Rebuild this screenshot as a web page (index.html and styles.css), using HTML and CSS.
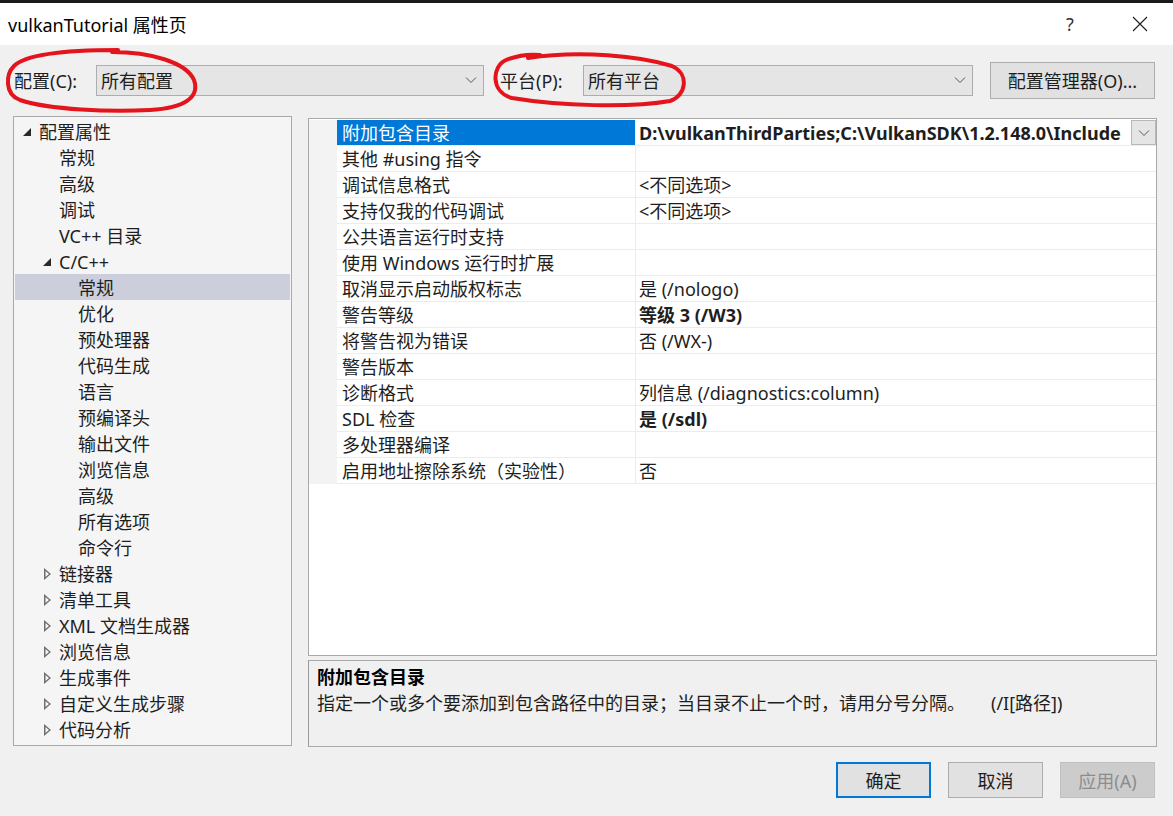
FILE: index.html
```html
<!DOCTYPE html>
<html lang="zh-CN">
<head>
  <meta charset="UTF-8" />
  <title>vulkanTutorial 属性页</title>
  <link rel="stylesheet" href="styles.css">
</head>
<body>
  <!-- title bar -->
  <div class="titlebar">
    <div class="title">vulkanTutorial 属性页</div>
    <div class="title-help">?</div>
    <div class="title-close">
      <svg width="16" height="16" viewBox="0 0 16 16"><path d="M1 1L15 15M15 1L1 15" stroke="#222" stroke-width="1.2" fill="none"/></svg>
    </div>
  </div>

  <!-- configuration / platform row -->
  <div class="toolbar">
    <label class="tb-label lbl-config">配置(C):</label>
    <div class="combo combo-config">
      <span>所有配置</span>
      <svg class="chev" width="12" height="8" viewBox="0 0 12 8"><path d="M1 1.5L6 6.5L11 1.5" stroke="#555" stroke-width="1" fill="none"/></svg>
    </div>
    <label class="tb-label lbl-platform">平台(P):</label>
    <div class="combo combo-platform">
      <span>所有平台</span>
      <svg class="chev" width="12" height="8" viewBox="0 0 12 8"><path d="M1 1.5L6 6.5L11 1.5" stroke="#555" stroke-width="1" fill="none"/></svg>
    </div>
    <button class="btn btn-manager">配置管理器(O)...</button>
  </div>

  <div class="main">
    <!-- left tree -->
    <div class="tree">
      <div class="node lv0"><span class="tri-open"></span>配置属性</div>
      <div class="node lv1">常规</div>
      <div class="node lv1">高级</div>
      <div class="node lv1">调试</div>
      <div class="node lv1">VC++ 目录</div>
      <div class="node lv1 has-tri"><span class="tri-open"></span>C/C++</div>
      <div class="node lv2 selected">常规</div>
      <div class="node lv2">优化</div>
      <div class="node lv2">预处理器</div>
      <div class="node lv2">代码生成</div>
      <div class="node lv2">语言</div>
      <div class="node lv2">预编译头</div>
      <div class="node lv2">输出文件</div>
      <div class="node lv2">浏览信息</div>
      <div class="node lv2">高级</div>
      <div class="node lv2">所有选项</div>
      <div class="node lv2">命令行</div>
      <div class="node lv1 has-tri"><span class="tri-closed"></span>链接器</div>
      <div class="node lv1 has-tri"><span class="tri-closed"></span>清单工具</div>
      <div class="node lv1 has-tri"><span class="tri-closed"></span>XML 文档生成器</div>
      <div class="node lv1 has-tri"><span class="tri-closed"></span>浏览信息</div>
      <div class="node lv1 has-tri"><span class="tri-closed"></span>生成事件</div>
      <div class="node lv1 has-tri"><span class="tri-closed"></span>自定义生成步骤</div>
      <div class="node lv1 has-tri"><span class="tri-closed"></span>代码分析</div>
    </div>

    <div class="right">
      <!-- property grid -->
      <div class="grid">
        <div class="prop selected">
          <div class="p-name">附加包含目录</div>
          <div class="p-value bold">
            <span class="p-text">D:\vulkanThirdParties;C:\VulkanSDK\1.2.148.0\Include</span>
            <span class="p-drop">
              <svg width="12" height="8" viewBox="0 0 12 8"><path d="M1 1.5L6 6.5L11 1.5" stroke="#555" stroke-width="1" fill="none"/></svg>
            </span>
          </div>
        </div>
        <div class="prop"><div class="p-name">其他 #using 指令</div><div class="p-value"></div></div>
        <div class="prop"><div class="p-name">调试信息格式</div><div class="p-value">&lt;不同选项&gt;</div></div>
        <div class="prop"><div class="p-name">支持仅我的代码调试</div><div class="p-value">&lt;不同选项&gt;</div></div>
        <div class="prop"><div class="p-name">公共语言运行时支持</div><div class="p-value"></div></div>
        <div class="prop"><div class="p-name">使用 Windows 运行时扩展</div><div class="p-value"></div></div>
        <div class="prop"><div class="p-name">取消显示启动版权标志</div><div class="p-value">是 (/nologo)</div></div>
        <div class="prop"><div class="p-name">警告等级</div><div class="p-value bold">等级 3 (/W3)</div></div>
        <div class="prop"><div class="p-name">将警告视为错误</div><div class="p-value">否 (/WX-)</div></div>
        <div class="prop"><div class="p-name">警告版本</div><div class="p-value"></div></div>
        <div class="prop"><div class="p-name">诊断格式</div><div class="p-value">列信息 (/diagnostics:column)</div></div>
        <div class="prop"><div class="p-name">SDL 检查</div><div class="p-value bold">是 (/sdl)</div></div>
        <div class="prop"><div class="p-name">多处理器编译</div><div class="p-value"></div></div>
        <div class="prop"><div class="p-name">启用地址擦除系统（实验性）</div><div class="p-value">否</div></div>
      </div>

      <!-- description -->
      <div class="desc">
        <div class="desc-title">附加包含目录</div>
        <div class="desc-text">指定一个或多个要添加到包含路径中的目录；当目录不止一个时，请用分号分隔。<span class="desc-switch">(/I[路径])</span></div>
      </div>
    </div>
  </div>

  <!-- dialog buttons -->
  <div class="footer">
    <button class="btn btn-ok">确定</button>
    <button class="btn">取消</button>
    <button class="btn btn-disabled">应用(A)</button>
  </div>

  <!-- red hand-drawn marks over the screenshot -->
  <svg class="marks" width="1173" height="816" viewBox="0 0 1173 816">
    <path d="M112 52 C150 52 186 62 194 80 C200 97 185 108 150 110 C110 112 50 110 20 100 C4 94 6 74 14 66 C26 54 70 50 118 50" stroke="#e3141c" stroke-width="4" fill="none" stroke-linecap="round"/>
    <path d="M528 58 C580 50 640 56 672 66 C690 74 686 96 670 101 C630 108 560 106 512 98 C490 92 492 66 506 60 C516 56 530 54 540 55" stroke="#e3141c" stroke-width="4" fill="none" stroke-linecap="round"/>
  </svg>
</body>
</html>
```

FILE: styles.css
```css
/* ---------- reset ---------- */
* {
  margin: 0;
  padding: 0;
  box-sizing: border-box;
}

body {
  width: 1173px;
  height: 816px;
  overflow: hidden;
  background: #f0f0f0;
  font-family: "Noto Sans", "Noto Sans CJK SC", sans-serif;
  font-size: 18px;
  color: #1e1e1e;
  position: relative;
}

/* ---------- title bar ---------- */
.titlebar {
  height: 45px;
  background: #ffffff;
  border-top: 3px solid #1a1a1a;
  display: flex;
  align-items: center;
  padding-left: 8px;
}
.title {
  flex: 1;
  font-size: 18px;
  color: #000;
}
.title-help {
  width: 20px;
  font-size: 18px;
  color: #333;
  margin-right: 46px;
}
.title-close {
  width: 16px;
  height: 16px;
  margin-right: 25px;
  display: flex;
}

/* ---------- toolbar ---------- */
.toolbar {
  height: 72px;
  display: flex;
  align-items: center;
  padding: 0 18px 0 14px;
  margin-top: -1px;
}
.tb-label {
  color: #1e1e1e;
}
.lbl-config { width: 82px; }
.lbl-platform { width: 83px; margin-left: 16px; }

.combo {
  height: 31px;
  background: #e5e5e5;
  border: 1px solid #adadad;
  display: flex;
  align-items: center;
  padding-left: 4px;
  padding-right: 6px;
}
.combo span { flex: 1; }
.combo-config { width: 388px; }
.combo-platform { width: 390px; }

.btn {
  font-family: inherit;
  font-size: 18px;
  color: #1e1e1e;
  background: #e1e1e1;
  border: 1px solid #adadad;
  height: 37px;
}
.btn-manager {
  width: 165px;
  margin-left: 17px;
}

/* ---------- main area ---------- */
.main {
  display: flex;
  padding: 0 16px 0 13px;
  gap: 16px;
  height: 631px;
}

/* tree */
.tree {
  width: 279px;
  height: 630px;
  background: #f5f5f5;
  border: 1px solid #a9a9a9;
  padding: 1px 1px 0 1px;
}
.node {
  height: 26px;
  line-height: 26px;
  padding-top: 2px;
  white-space: nowrap;
  display: flex;
  align-items: center;
}
.node.lv0 { padding-left: 8px; }
.node.lv1 { padding-left: 44px; }
.node.lv1.has-tri { padding-left: 28px; }
.node.lv2 { padding-left: 63px; }
.node.selected { background: #cccedb; }

.tri-open {
  width: 8px;
  height: 8px;
  margin-right: 8px;
  background: #2a2a2a;
  clip-path: polygon(100% 0, 100% 100%, 0 100%);
}
.tri-closed {
  width: 7px;
  height: 12px;
  margin-right: 8px;
  margin-left: 1px;
  background: #6f6f6f;
  clip-path: polygon(0 0, 100% 50%, 0 100%, 0 0, 1.5px 3px, 1.5px 9px, 5px 6px, 1.5px 3px);
}

/* right column */
.right {
  flex: 1;
  display: flex;
  flex-direction: column;
  padding-top: 2px;
}

.grid {
  height: 538px;
  background: #ffffff;
  border: 1px solid #a9a9a9;
  padding-top: 1px;
}
.prop {
  display: flex;
  height: 26px;
  background: #f3f3f3;
  padding-left: 28px;
}
.p-name,
.p-value {
  height: 26px;
  line-height: 27px;
  background: #ffffff;
  border-bottom: 1px solid #ececec;
  white-space: nowrap;
  overflow: hidden;
}
.p-name {
  width: 299px;
  padding-left: 5px;
  border-right: 1px solid #ececec;
}
.p-value {
  flex: 1;
  padding-left: 3px;
  display: flex;
}
.p-value.bold { font-weight: 700; }
.prop.selected .p-name {
  background: #0078d7;
  color: #ffffff;
}
.p-text {
  flex: 1;
  overflow: hidden;
}
.p-drop {
  width: 25px;
  height: 25px;
  background: #e5e5e5;
  border: 1px solid #b8b8b8;
  display: flex;
  align-items: center;
  justify-content: center;
  flex-shrink: 0;
}

.desc {
  margin-top: 4px;
  height: 87px;
  border: 1px solid #a9a9a9;
  border-left-color: #9a9a9a;
  background: #f0f0f0;
  padding: 3px 8px;
  line-height: 26px;
}
.desc-title {
  font-weight: 700;
  color: #000;
}
.desc-switch {
  margin-left: 26px;
}

/* ---------- footer buttons ---------- */
.footer {
  display: flex;
  justify-content: flex-end;
  gap: 17px;
  padding: 15px 18px 0 0;
}
.footer .btn {
  width: 95px;
  height: 36px;
}
.btn-ok {
  border: 2px solid #0078d7;
}
.btn-disabled {
  background: #cccccc;
  border-color: #bfbfbf;
  color: #8c8c8c;
}

/* annotation overlay */
.marks {
  position: absolute;
  left: 0;
  top: 0;
  pointer-events: none;
}
```
